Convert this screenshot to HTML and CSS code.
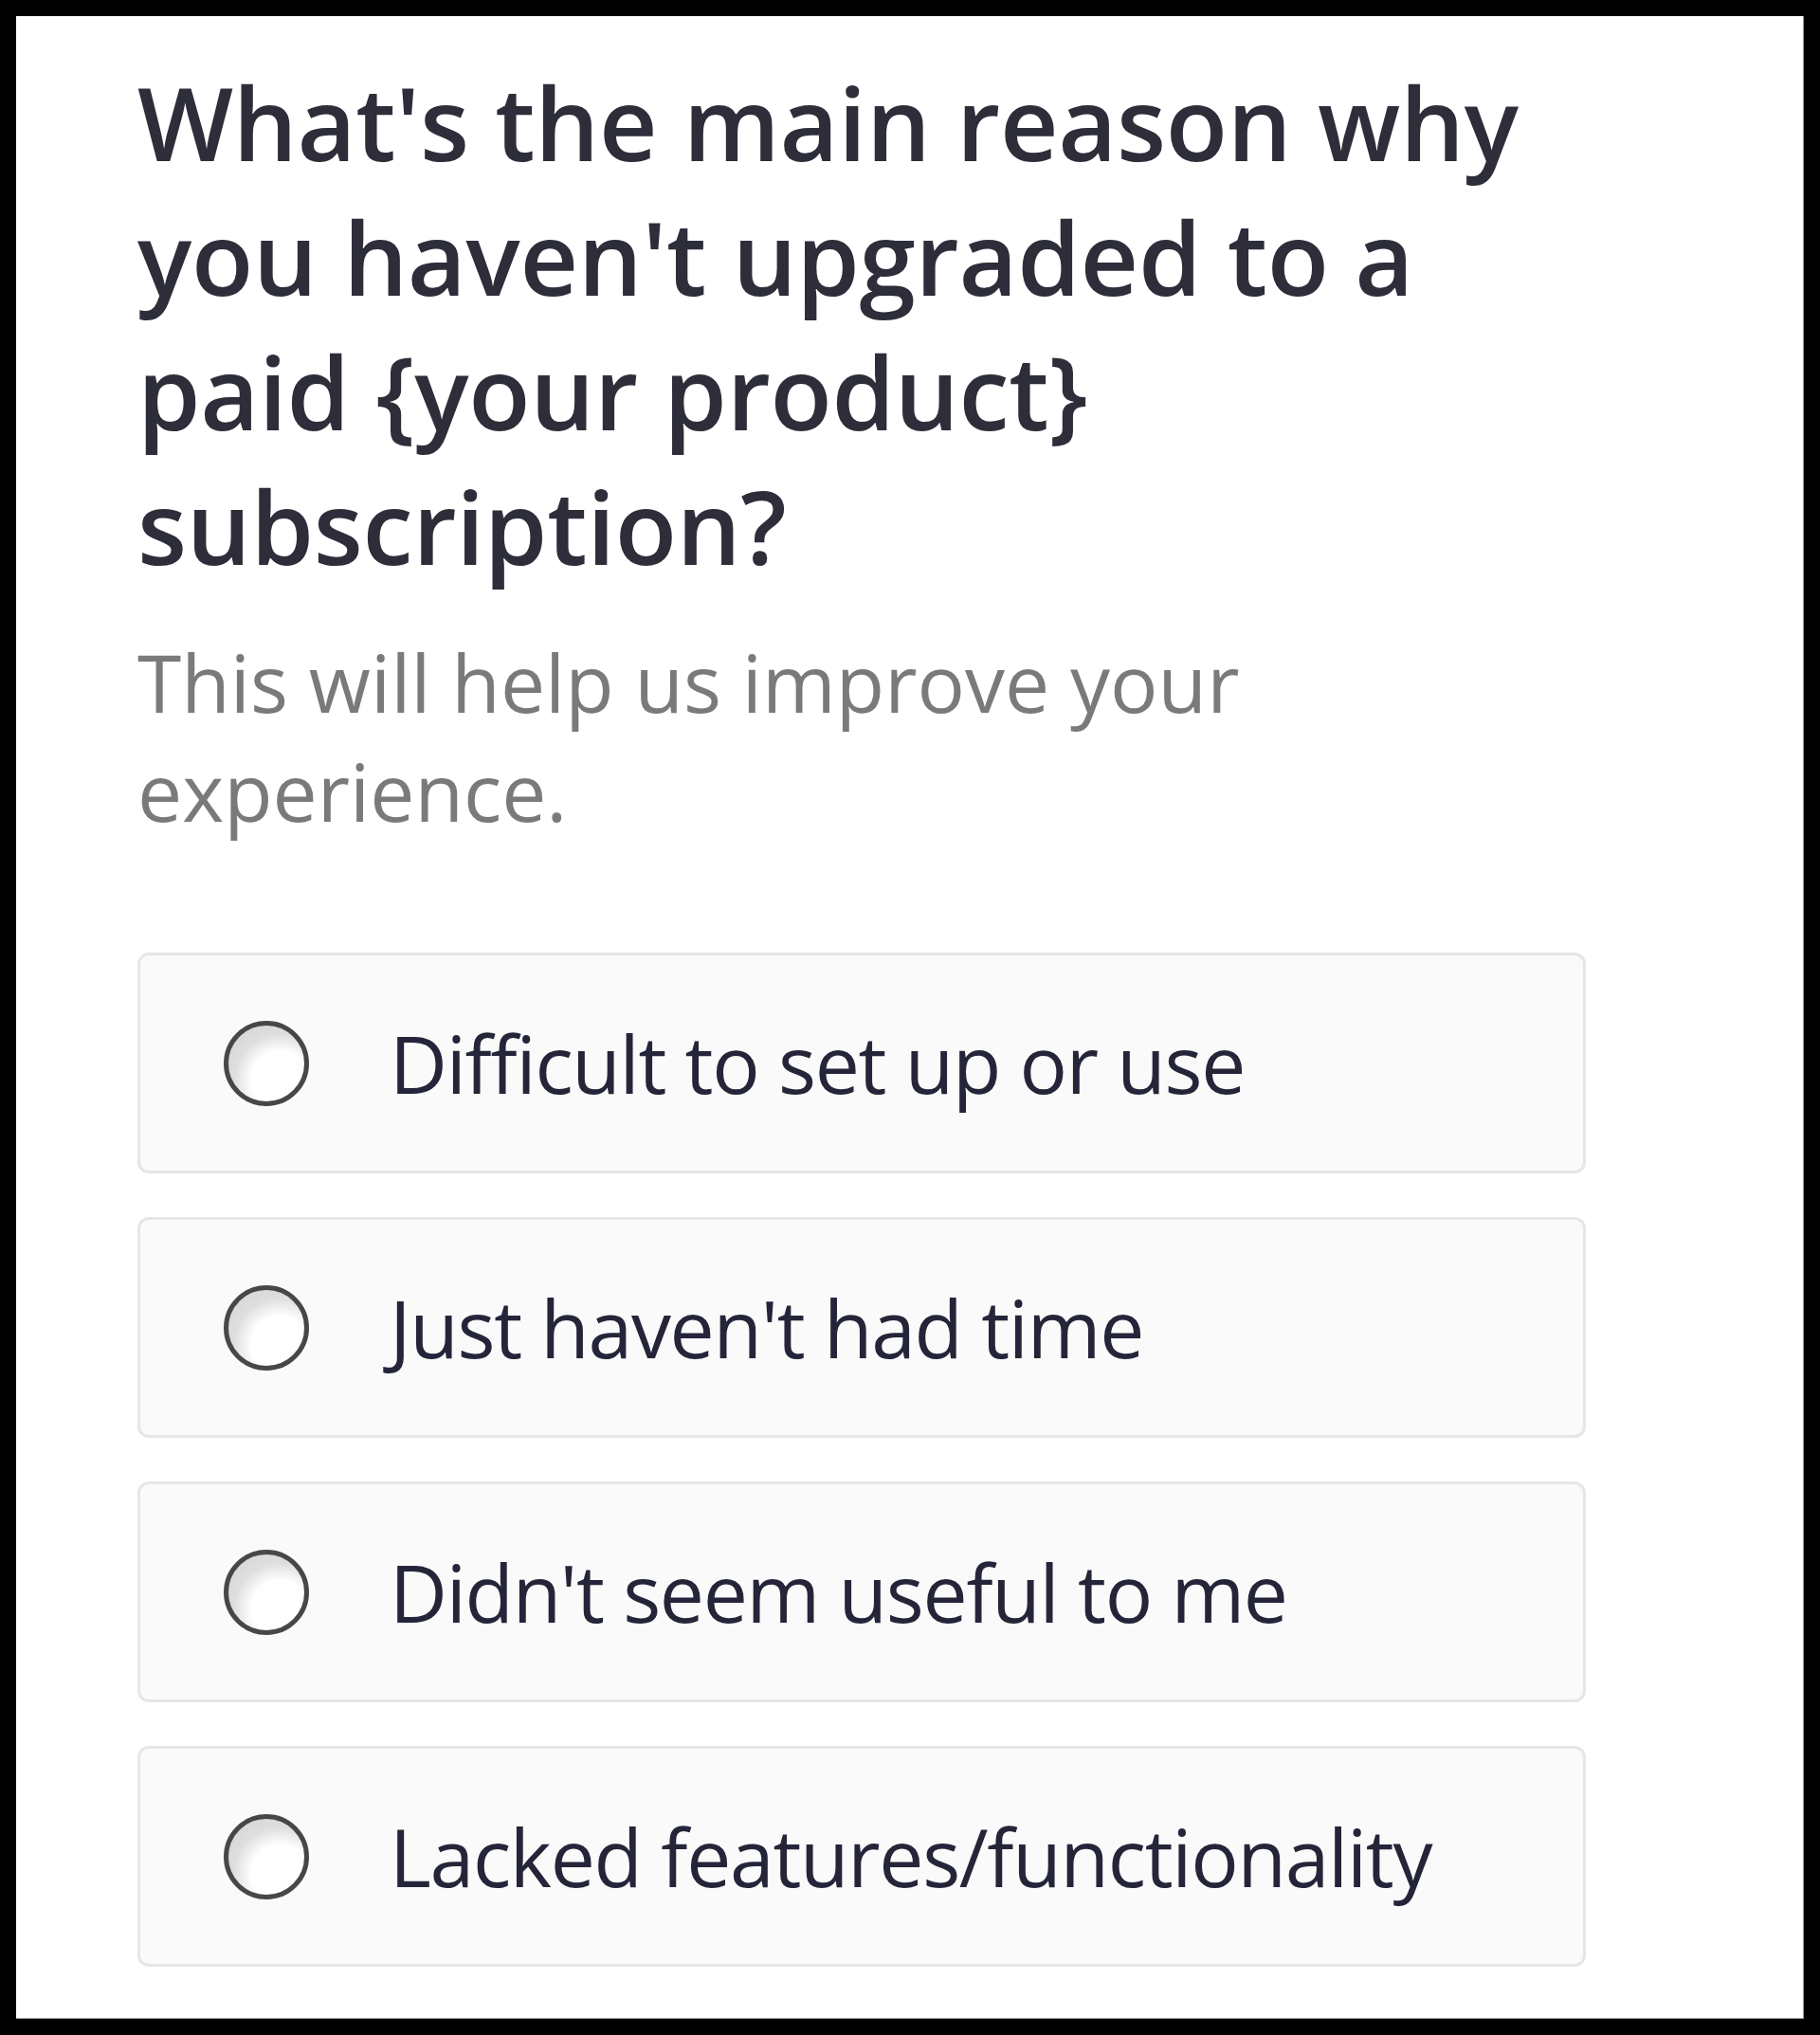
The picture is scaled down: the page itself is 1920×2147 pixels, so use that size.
FILE: index.html
```html
<!DOCTYPE html>
<html lang="en">
<head>
<meta charset="utf-8">
<title>Survey</title>
<link rel="stylesheet" href="styles.css">
</head>
<body>
<main class="frame">
  <h1 class="question">What's the main reason why you haven't upgraded to a paid {your product} subscription?</h1>
  <p class="hint">This will help us improve your experience.</p>
  <ul class="options">
    <li class="option"><span class="radio"></span><span class="label">Difficult to set up or use</span></li>
    <li class="option"><span class="radio"></span><span class="label">Just haven't had time</span></li>
    <li class="option"><span class="radio"></span><span class="label">Didn't seem useful to me</span></li>
    <li class="option"><span class="radio"></span><span class="label">Lacked features/functionality</span></li>
  </ul>
</main>
</body>
</html>
```

FILE: styles.css
```css
html, body {
  margin: 0;
  padding: 0;
  background: #000;
}
body {
  padding: 17px;
  box-sizing: border-box;
  width: 1920px;
  height: 2147px;
}
.frame {
  background: #fff;
  height: 2113px;
  box-sizing: border-box;
  padding: 41px 0 0 128px;
  font-family: "Open Sans", "Noto Sans", sans-serif;
  box-shadow: inset -1px 0 0 #9a9a9a, inset 0 -1px 0 #9a9a9a;
}
.question {
  margin: 0;
  max-width: 1560px;
  font-size: 107px;
  line-height: 142px;
  font-weight: 600;
  letter-spacing: -0.3px;
  color: #2d2e3a;
}
.hint {
  margin: 36px 0 0;
  max-width: 1300px;
  font-size: 84px;
  line-height: 115px;
  font-weight: 400;
  color: #7a7a7a;
}
.options {
  list-style: none;
  margin: 113px 0 0;
  padding: 0;
  width: 1528px;
  display: flex;
  flex-direction: column;
  gap: 46px;
}
.option {
  height: 233px;
  box-sizing: border-box;
  border: 3px solid #e6e6e6;
  border-radius: 12px;
  background: #fafafa;
  display: flex;
  align-items: center;
  padding-left: 88px;
}
.radio {
  width: 90px;
  height: 90px;
  box-sizing: border-box;
  border-radius: 50%;
  border: 5px solid #474747;
  background: radial-gradient(circle at 68% 72%, #ffffff 0, #ffffff 38%, #dedede 62%, #d2d2d2 100%);
  flex: none;
}
.label {
  margin-left: 85px;
  font-size: 84px;
  line-height: 115px;
  letter-spacing: -1.3px;
  color: #25253a;
}
```
